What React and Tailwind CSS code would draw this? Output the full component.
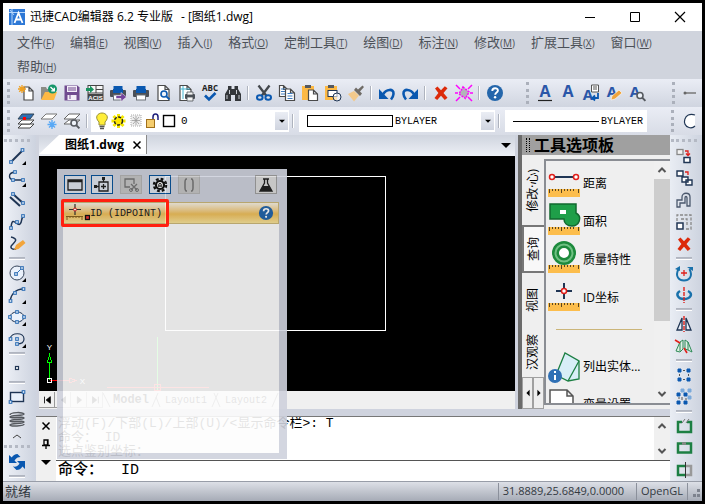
import React, { useState } from 'react';

const menus = [
    ['文件', 'F'], ['编辑', 'E'], ['视图', 'V'], ['插入', 'I'], ['格式', 'O'], ['定制工具', 'T'],
    ['绘图', 'D'], ['标注', 'N'], ['修改', 'M'], ['扩展工具', 'X'], ['窗口', 'W'], ['帮助', 'H'],
];

const blue = '#0a58b0';
const navy = '#1f3554';
const green = '#1c7f43';

function Page({ x = 4, y = 2, w = 10, h = 13, stroke = '#4a4a4a' }) {
    return <path d={`M${x} ${y}h${w - 4}l4 4v${h - 4}h${-w}zM${x + w - 4} ${y}v4h4`} fill="#fff" stroke={stroke} strokeWidth="1.2" />;
}

function Printer() {
    return (
        <>
            <rect x="4.5" y="2" width="9" height="4" fill={blue} />
            <rect x="1" y="6" width="16" height="7" rx="1" fill="#4b5057" />
            <rect x="4" y="5" width="10" height="4" fill={blue} />
            <rect x="4.5" y="11" width="9" height="5" fill="#fff" stroke="#6d7278" />
        </>
    );
}

function Lens({ x, y, r = 3, color = '#55595f' }) {
    return (
        <g fill="#eef3fa" stroke={color} strokeWidth="1.6">
            <circle cx={x} cy={y} r={r} />
            <path d={`M${x + r - 0.6} ${y + r - 0.6}l3 3`} strokeWidth="2" />
        </g>
    );
}

function Node({ x, y }) {
    return <rect x={x - 1.3} y={y - 1.3} width="2.6" height="2.6" fill="#fff" stroke="#2f6fb5" strokeWidth="1.1" />;
}

const Corner = () => <path d="M18 14v4h-4z" fill="#000" />;

function LetterA({ x = 9, size = 17, y = 14 }) {
    return <text x={x} y={y} fontSize={size} fontWeight="700" fontFamily="Open Sans, sans-serif" textAnchor="middle" fill="#2a56a8">A</text>;
}

function Help() {
    return (
        <>
            <circle cx="9" cy="9" r="8" fill="#2466ab" />
            <path d="M6.3 7c0-3.7 5.6-3.5 5.6-.4 0 2-2.7 2-2.7 4.2" fill="none" stroke="#fff" strokeWidth="1.9" />
            <circle cx="9.1" cy="13.3" r="1.2" fill="#fff" />
        </>
    );
}

function Cross() {
    return <path d="M3 4.5l2.500-2L9 6.200 12.800 2.300 15.500 4.300 11.500 9l4 4.800L12.800 16 9 11.700 5.200 16l-2.700-2L6.400 9z" fill="#dc2a0a" />;
}

const icons = {
    new: (
        <>
            <Page x={7} y={3} w={9} h={13} />
            <path d="M5 1v8M1 5h8M2.200 2.200l5.600 5.600M7.800 2.200L2.200 7.800" stroke="#f0a020" strokeWidth="1.3" />
        </>
    ),
    open: (
        <>
            <path d="M1 15V3h5l1 2h5v10z" fill="#8c8c86" />
            <path d="M1 16l4-8h12l-3 8z" fill="#fdb944" />
            <circle cx="12.500" cy="5" r="4.500" fill="#16966a" />
            <path d="M10.500 3l3.500 3.500M14.300 3.800v3h-3" stroke="#fff" fill="none" strokeWidth="1.3" />
        </>
    ),
    save: (
        <>
            <path d="M1.500 1.500h13l2 2v13h-15z" fill="#704b8f" />
            <path d="M4 2h10v6H4zM4.500 11h9v5h-9z" fill="#f3eef8" />
            <path d="M5 4h8M5 6h8M7 11v4" stroke="#704b8f" />
        </>
    ),
    import: (
        <>
            <rect x="2" y="1.500" width="15" height="15" fill="#f7f7f7" stroke="#454545" />
            <path d="M10 2v7M10 5.500h7M2 9h15" stroke="#454545" />
            <rect x="2" y="10" width="15" height="7" fill="#454545" />
            <text x="9.500" y="16" fontSize="6" fontWeight="700" textAnchor="middle" fontFamily="Liberation Sans, sans-serif" fill="#fff">ACIS</text>
            <path d="M0 4h4V1.500L8 5.500 4 9V7H0z" fill="#18925f" />
        </>
    ),
    printExport: <><Printer /><path d="M7 11.500h5V8.500l5.500 4.500-5.500 4.500v-3H7z" fill="#75469b" stroke="#fff" strokeWidth=".5" /></>,
    print: <Printer />,
    preview: <><Page x={3} y={1.5} w={11} h={15} /><Lens x={9} y={10} color={blue} /></>,
    pageSetup: (
        <>
            <Page x={2} y={1.5} w={11} h={15} />
            <path d="M5 2v13M2 5h10" stroke="#42b5d1" />
            <rect x="7" y="10" width="10" height="5" rx="1" fill="#4b5057" />
            <path d="M9 8h6v3H9zM9 13h6v4H9z" fill="#f4f4f4" stroke="#4b5057" strokeWidth=".8" />
        </>
    ),
    spell: (
        <>
            <text x="9" y="7" fontSize="8" fontWeight="700" textAnchor="middle" fontFamily="Open Sans, sans-serif" fill="#222">ABC</text>
            <path d="M4 11.500l4 4 6.500-6.500" stroke={blue} strokeWidth="2.600" fill="none" />
        </>
    ),
    find: (
        <g fill="#33363a">
            <path d="M4 2h3.500v3h3V2H14v3l3 5v7h-6v-6H7v6H1v-7l3-5z" />
            <path d="M3 11v4M15 11v4M5.500 6v4M12.500 6v4" stroke="#c9ccd2" />
        </g>
    ),
    cut: (
        <>
            <path d="M3.500 1.500L11.500 12M14.500 1.500L6.500 12" stroke="#44484d" strokeWidth="2.300" />
            <ellipse cx="4.800" cy="13.500" rx="2.800" ry="2.300" fill="none" stroke={blue} strokeWidth="2" />
            <ellipse cx="13.200" cy="13.500" rx="2.800" ry="2.300" fill="none" stroke={blue} strokeWidth="2" />
        </>
    ),
    copy: (
        <>
            <Page x={1.5} y={1.5} w={8} h={11} />
            <path d="M3 5h4M3 7.500h4M3 10h4" stroke="#3e7cc0" />
            <Page x={7.5} y={5} w={9} h={11.500} />
            <path d="M9.500 9.500h5M9.500 12h5M9.500 14.500h5" stroke="#3e7cc0" />
        </>
    ),
    paste: (
        <>
            <rect x="1" y="2" width="12" height="14" fill="#fdb944" />
            <path d="M4 1h6v3H4z" fill="#55595f" />
            <Page x={7.5} y={6} w={9} h={10.500} />
        </>
    ),
    pasteSpecial: (
        <>
            <path d="M1 2h12v14H1z" fill="#fdb944" />
            <path d="M4 1h6v3H4z" fill="#55595f" />
            <rect x="4" y="6.500" width="9" height="6" fill="#fff" stroke={navy} />
            <circle cx="13" cy="13" r="4" fill="#fff" fillOpacity=".6" stroke={navy} />
        </>
    ),
    brush: (
        <>
            <path d="M1 10l6-3 5 4.500-5 6z" fill="#f2c98c" />
            <path d="M7 6l6 6 2-2.500-2-2 4-4.500-1.500-1.500L11 5.500 9 3.500z" fill="#6f6b66" />
        </>
    ),
    undo: <><path d="M1 5v10h9.500z" fill={blue} /><path d="M5 10.500C8 5 16 4 15.500 10c-.2 2.500-1.200 4-2.500 5.500" fill="none" stroke={blue} strokeWidth="2.600" /></>,
    redo: <><path d="M17 5v10H7.500z" fill={blue} /><path d="M13 10.500C10 5 2 4 2.500 10c.2 2.500 1.200 4 2.500 5.500" fill="none" stroke={blue} strokeWidth="2.600" /></>,
    delete: <Cross />,
    erase: (
        <>
            <path d="M1 1l4 4M17 1l-4 4M1 17l4-4M17 17l-4-4M0 9h3M15 9h3" stroke="#f0f" strokeWidth="1.500" />
            <path d="M8 3l6 5-3.500 6.500L4 10z" fill="#b2b5b8" stroke="#f0f" strokeWidth="1.500" strokeDasharray="2 1" />
        </>
    ),
    help: <Help />,
    textA: <><LetterA y={13} size={16} /><path d="M2 16.500h14" stroke="#222" strokeWidth="1.200" /></>,
    textPlain: <LetterA y={13} size={16} />,
    textDoc: (
        <>
            <LetterA x={6} y={16} size={15} />
            <path d="M9.500 1h7v7h-7zM11 3h4M11 5h4" fill="#fff" stroke="#555" />
            <path d="M16 9v5h-5M13 11.500L10.500 14l2.500 2.500" fill="none" stroke={blue} strokeWidth="1.800" />
        </>
    ),
    textEdit: <><LetterA x={7} y={13} size={15} /><path d="M6 16l1-4 7-6 3 3-7 6z" fill="#f0a43c" stroke="#fff" strokeWidth=".6" /></>,
    textFind: <><LetterA x={7} y={13} size={15} /><Lens x={12} y={11.500} /></>,
    layers: (
        <>
            <path d="M1 16l4-4h12l-4 4z" fill="#fff" stroke="#444" />
            <path d="M1 12l4-4h12l-4 4z" fill="#fff" stroke="#444" />
            <path d="M1 7l4-5h12l-4 5z" fill="#2e6fb3" stroke="#345" />
            <rect x="6" y="5" width="3" height="3" fill="#f00" />
        </>
    ),
    layerFreeze: (
        <>
            <path d="M1 7l5-5h11l-5 5z" fill="#fff" stroke="#777" />
            <path d="M12 8v9M7.500 12.500h9M9 9.500l6 6M15 9.500l-6 6" stroke="#5aa9f5" strokeWidth="1.400" />
        </>
    ),
    layerFind: (
        <>
            <path d="M1 12l5-4h11l-5 4z" fill="#fff" stroke="#666" />
            <path d="M1 7l5-5h11l-5 5z" fill="#fff" stroke="#666" />
            <Lens x={11} y={11} />
        </>
    ),
    dimension: <><path d="M2 9h12" stroke="#777" strokeWidth="1.500" /><circle cx="3" cy="9" r="1.500" fill="#666" /></>,
    arcTool: <path d="M14 3C3-1 0 14 8 15.500c3 1 5-.500 6-1.500" fill="#fff" stroke={navy} strokeWidth="1.200" />,
    line: <><path d="M3 15L14 4" stroke={navy} strokeWidth="2" /><Node x={3} y={15} /><Node x={14.500} y={3} /><Corner /></>,
    polyline: <><path d="M7 3C-1 4 1 10 5 11h10" stroke={navy} fill="none" strokeWidth="1.400" /><Node x={7} y={3} /><Node x={5} y={11} /><Node x={15} y={11} /><Corner /></>,
    doubleLine: <><path d="M2 6l10 9M5 3l11 10" stroke={navy} strokeWidth="2" /><Node x={5} y={3} /><Node x={15} y={12} /></>,
    spline: <><path d="M3 15c1-14 6-1 9-4s0-5 4-8" stroke={navy} fill="none" strokeWidth="1.500" /><Node x={3} y={15} /><Node x={9} y={9} /><Node x={15} y={3} /></>,
    sketch: <><path d="M3 2c8 2 4 5 1 8s1 5 4 4" stroke={navy} fill="none" strokeWidth="1.500" /><path d="M6 15l2-5 7-5 2.500 3-7 6z" fill="#f2a53c" /></>,
    circle: <><circle cx="9" cy="9" r="7" fill="#eaf1fb" stroke="#37465c" /><path d="M8 10l5-5" stroke="#2f6fb5" /><Node x={8} y={10} /><Node x={14} y={4} /><Corner /></>,
    arc: <><path d="M2 15c1-7 6-12 13-12" stroke={navy} fill="none" strokeWidth="1.300" /><Node x={2.500} y={15} /><Node x={7} y={7} /><Node x={15.500} y={3} /><Corner /></>,
    ellipse: <><ellipse cx="9" cy="9" rx="7" ry="5" fill="#eaf1fb" stroke={navy} /><Node x={9} y={4} /><Node x={2} y={9} /><Node x={16} y={9} /><Node x={9} y={14} /><Corner /></>,
    ellipseArc: <><path d="M2 9c1-7 14-7 14 0 0 4-3 5-7 5" stroke={navy} fill="none" strokeWidth="1.200" /><Node x={2.500} y={9} /><Node x={9} y={9} /><Node x={9} y={14} /><Corner /></>,
    point: <rect x="7.500" y="7.500" width="3" height="3" fill="#fff" stroke={navy} strokeWidth="1.200" />,
    rect: <><rect x="2.500" y="4.500" width="13" height="9" fill="#eaf1fb" stroke={navy} strokeWidth="1.400" /><Node x={2.500} y={14} /><Node x={15.500} y={4} /></>,
    coil: <path d="M2 5c0-3 14-3 14-1S2 5 2 7s14-1 14 1S2 9 2 11s14-1 14 1S2 13 2 15s14 1 14-1" fill="none" stroke="#55595f" strokeWidth="1.500" />,
    sync: (
        <>
            <path d="M1 2v8h8L6.500 7.500C8 5 10 4 12.500 4L9.500 1C7 1 5 2.500 3.800 4.500z" fill={blue} />
            <path d="M17 16V8H9l2.500 2.500C10.500 13 8 14 5 13.500L8.500 17c2.500 0 4.500-1 6-3.500z" fill={blue} />
        </>
    ),
    copySel: <><rect x="2" y="2.500" width="6" height="5" fill="#f2f2f2" stroke="#888" strokeWidth="1.300" /><path d="M10 4h3v4M11 6.500l2 2 2-2" fill="none" stroke="#e0201b" strokeWidth="1.300" /><rect x="9" y="10.500" width="6" height="5" fill="#fff" stroke={navy} strokeWidth="1.500" /></>,
    copyMulti: <><path d="M2 2h6v5H2zM7 8h6v5H7zM11 11h6v5h-6z" fill="#fff" stroke={navy} strokeWidth="1.400" /><path d="M10 3h3v3" fill="none" stroke="#e0201b" strokeWidth="1.300" /></>,
    offset: <path d="M2 16V9h5V6c0-5 8-5 8 0v9h-3V7c0-2-2-2-2 0v5H5v4z" fill="none" stroke="#4b586d" strokeWidth="1.300" />,
    scale: <><path d="M2 8V2h14v14h-6M6 6h6v6" fill="none" stroke="#888" strokeWidth="1.300" strokeDasharray="3 1.500" /><rect x="2" y="10" width="6" height="6" fill="#fff" stroke={navy} strokeWidth="1.500" /></>,
    rotate: <><path d="M3.500 5c-4 8 1 11.500 5.500 11.500S18.500 13 14.500 5" fill="none" stroke="#1971ab" strokeWidth="2" /><path d="M0 5l5-3v5zM12 3h6v4z" fill="#1971ab" /><path d="M9 6v6M6 9h6" stroke="#e0201b" strokeWidth="1.300" /></>,
    rotate3d: <><path d="M5 5c-5 3-2 8 4 8s10-5 4-8" fill="none" stroke="#1971ab" strokeWidth="2.500" /><path d="M9 1v16" stroke="#e0201b" strokeWidth="1.400" strokeDasharray="4 1" /></>,
    mirror: <><path d="M7 3v12H2zM11 3v12h5z" fill="#e7eef8" stroke={navy} strokeWidth="1.300" /><path d="M9 1v16" stroke="#e0201b" strokeWidth="1.400" strokeDasharray="4 1" /></>,
    mirror3d: <><path d="M1 14l4-9 3-2v9l-3 3zM10 12V3l3 2 4 10-4-2zM5 5v9M13 5v8" fill="#dff0e6" stroke="#2d8a56" /><path d="M0 3l5 3M9 11l3 5" stroke="#e0201b" strokeWidth="1.600" /></>,
    array: <><path d="M3 3h3v3H3zM12 3h3v3h-3zM3 12h3v3H3zM12 12h3v3h-3z" fill={blue} stroke={blue} /><path d="M8 4.500h2M8 13.500h2M4.500 8v2M13.500 8v2" stroke="#555" /></>,
    array3d: <><path d="M6 1h3v3H6zM13 1h3v3h-3zM13 8h3v3h-3z" fill="#7ba9da" stroke="#7ba9da" /><path d="M2 5h3v3H2zM9 5h3v3H9zM2 13h3v3H2zM9 13h3v3H9z" fill={blue} stroke={blue} /><path d="M7 9v3M3 10h2M10 11h2" stroke="#555" /></>,
    break: <><path d="M7 5H3v10h13V5h-4" fill="none" stroke={green} strokeWidth="2.500" /><path d="M7 6l3-4M11 6l3-4" stroke="#777" /></>,
    join: <><rect x="3" y="4.500" width="13" height="9" fill="none" stroke={green} strokeWidth="2.500" /><path d="M7 4.500h4" stroke="#888" strokeWidth="2.500" /></>,
    trim: <><path d="M10 5H3v9h7" fill="none" stroke={green} strokeWidth="2.500" /><path d="M11 5h5v9h-5" fill="none" stroke="#999" strokeWidth="2.500" /><path d="M10.500 1v16" stroke="#333" /></>,
};

const standardTools = [
    'new', 'open', 'save', 'import', 'printExport', 'print', 'preview', 'pageSetup', 'spell', 'find', '|',
    'cut', 'copy', 'paste', 'pasteSpecial', 'brush', '|', 'undo', 'redo', '|', 'delete', 'erase', '|', 'help',
];
const textTools = ['textA', 'textPlain', 'textDoc', 'textEdit', 'textFind'];
const drawTools = [
    'line', 'polyline', 'doubleLine', 'spline', 'sketch', '|', 'circle', 'arc', 'ellipse', 'ellipseArc', '|',
    'point', '|', 'rect', 'coil',
];
const modifyTools = [
    'copySel', 'copyMulti', 'offset', 'scale', 'delete', '|', 'rotate', 'rotate3d', '|', 'mirror', 'mirror3d', '|',
    'array', 'array3d', '|', 'break', 'join', 'trim',
];

function Icon({ name, className = 'size-[18px]' }) {
    return <svg viewBox="0 0 18 18" className={`overflow-visible ${className}`} aria-hidden="true">{icons[name]}</svg>;
}

function HTool({ name }) {
    if (name === '|') return <span className="mx-[3px] h-3.5 w-0.5 shrink-0 border-r border-white bg-[#aeb3be]" />;
    return (
        <button aria-label={name} className="flex h-6 w-[23px] shrink-0 items-center justify-center">
            <Icon name={name} />
        </button>
    );
}

function VTool({ name }) {
    if (name === '|') return <span className="my-[2px] h-[3px] w-4 shrink-0 border-y border-t-[#b0b5c0] border-b-white bg-[#b9bdc7]" />;
    return (
        <button aria-label={name} className="flex h-[22px] w-6 shrink-0 items-center justify-center">
            <Icon name={name} />
        </button>
    );
}

const GripV = () => <span className="mx-1 h-[22px] w-0 shrink-0 border-l-[3px] border-dotted border-[#abb0bb]" />;
const GripH = () => <span className="my-[3px] h-0 w-[26px] shrink-0 border-t-[3px] border-dotted border-[#b4b9c4]" />;

function Arrow({ dir = 'down', className = 'size-2' }) {
    const paths = { down: 'M0 3h10L5 8z', left: 'M7 1v8L3 5z', right: 'M3 1v8l4-4z' };
    return <svg viewBox="0 0 10 10" className={className}><path d={paths[dir]} fill="currentColor" /></svg>;
}

function Chevron({ up }) {
    return (
        <svg viewBox="0 0 10 10" className="size-2.5">
            <path d={up ? 'M1.500 7L5 3.500 8.500 7' : 'M1.500 3L5 6.500 8.500 3'} fill="none" stroke="#555" strokeWidth="2" />
        </svg>
    );
}

const DropButton = () => (
    <span className="pointer-events-none flex h-5 w-[15px] shrink-0 items-center justify-center border border-white bg-linear-to-b from-[#eaedf4] to-[#cfd4df] text-black">
        <Arrow className="size-1.5" />
    </span>
);

function LayerCombo() {
    return (
        <label className="flex h-[22px] w-[198px] shrink-0 items-center bg-white pl-1">
            <svg viewBox="0 0 84 18" className="h-[18px] w-[84px] shrink-0">
                <path d="M4 10C-1 5 3 1 7 1s8 4 3 9v3H4z" fill="#ffee38" stroke="#98903a" />
                <path d="M4.500 14.500h5M5 16.500h4" stroke="#555" strokeWidth="1.500" />
                <path d="M23.500 2v14M16.500 9h14M18.500 4l10 10M28.500 4l-10 10" stroke="#f5e800" strokeWidth="3" />
                <circle cx="23.500" cy="9" r="4" fill="#ffe800" stroke="#222" strokeWidth="1.500" strokeDasharray="3 1.500" />
                <path d="M36 3h10v11H36z" fill="#eee" stroke="#aaa" strokeDasharray="1 1" />
                <path d="M41 4v9M37 8.500h8M38 5l6 7M44 5l-6 7" stroke="#999" strokeWidth=".8" />
                <path d="M58 8V5c0-4 5-4 5 0v3" fill="none" stroke="#1f1f7a" strokeWidth="1.500" />
                <rect x="51.500" y="7.500" width="8" height="8" fill="#f5cd6e" stroke="#a0701c" />
                <rect x="68.500" y="3.500" width="11" height="11" fill="#fff" stroke="#000" strokeWidth="1.400" />
            </svg>
            <select aria-label="图层" className="min-w-0 flex-1 appearance-none bg-transparent pl-0.5 font-['Liberation_Mono',monospace] text-[11px] outline-none">
                <option>0</option>
            </select>
            <DropButton />
        </label>
    );
}

const Ruler = () => (
    <>
        <rect x="0" y="19" width="32" height="8" fill="#fcbd4c" />
        <path d="M1.500 19v4M4.500 19v2M7.500 19v2M10.500 19v2M13.500 19v4M16.500 19v2M19.500 19v2M22.500 19v2M25.500 19v2M30.500 19v4" stroke="#5a4620" />
    </>
);

const paletteItems = [
    {
        label: '距离',
        art: <><path d="M6 7h20" stroke={navy} strokeWidth="2" /><circle cx="4" cy="7" r="2.500" fill="#fff" stroke="#e0201b" strokeWidth="1.500" /><circle cx="28" cy="7" r="2.500" fill="#fff" stroke="#e0201b" strokeWidth="1.500" /><Ruler /></>,
    },
    {
        label: '面积',
        art: <><Ruler /><path d="M2-4h26v9c7 4 3 13-4 13-5 0-8-3-8-7H2z" fill="#1f9f49" stroke="#12692f" strokeWidth="1.500" /><rect x="12" y="2" width="6" height="4" fill="#fff" /></>,
    },
    {
        label: '质量特性',
        art: <><Ruler /><circle cx="16" cy="7" r="8.500" fill="#fff" stroke="#1c8a3c" strokeWidth="7" /><circle cx="16" cy="7" r="8.500" fill="none" stroke="#6fc183" strokeWidth="2" /></>,
    },
    {
        label: 'ID坐标',
        art: <><path d="M16 -1v16M8 7h16" stroke={navy} strokeWidth="2" /><circle cx="16" cy="7" r="2.500" fill="#fff" stroke="#e0201b" strokeWidth="1.500" /><Ruler /></>,
    },
];

function ToolPalette() {
    const tabs = [['修改·心)', 'h-[70px]'], ['查询', 'h-12'], ['视图', 'h-[54px]'], ['汉观察', 'h-[50px]']];
    const [active, setActive] = useState('查询');
    return (
        <section className="flex w-[152px] shrink-0 flex-col border-l-4 border-[#6b6b6b] bg-[#efefef]">
            <h2 className="flex h-5 shrink-0 items-center gap-1 bg-[#a0a0a0] pl-1 text-[16px] font-bold text-black">
                <span className="h-3.5 w-1 border-x border-dotted border-black" />
                工具选项板
            </h2>
            <div className="flex min-h-0 flex-1">
                <div className="flex w-[22px] flex-col overflow-hidden">
                    {tabs.map(([label, height]) => (
                        <button
                            key={label}
                            onClick={() => setActive(label)}
                            className={`flex w-full shrink-0 items-center justify-center text-[12px] whitespace-nowrap ${height} ${active === label ? 'border-2 border-r-0 border-[#777] bg-[#f8f8f8]' : ''}`}
                        >
                            <span className="rotate-180 [writing-mode:vertical-rl] [text-orientation:sideways]">{label}</span>
                        </button>
                    ))}
                    <div className="flex min-h-0 flex-1">
                        <button aria-label="向左" className="flex flex-1 items-center justify-center border border-[#a0a0a0] bg-[#eee]"><Arrow dir="left" /></button>
                        <button aria-label="向右" className="flex flex-1 items-center justify-center border border-[#a0a0a0] bg-[#eee]"><Arrow dir="right" /></button>
                    </div>
                </div>
                <div className="mt-1 mb-1 flex min-w-0 flex-1 border-2 border-r-0 border-[#8a8d93] bg-[#efefef]">
                    <ul className="min-w-0 flex-1 overflow-hidden pt-1 pl-0.5 text-[12px] text-black">
                        {paletteItems.map((item) => (
                            <li key={item.label} className="h-[38px]">
                                <button className="flex h-full w-full items-center gap-[3px] whitespace-nowrap">
                                    <svg viewBox="0 0 32 28" className="h-7 w-8 shrink-0 overflow-visible">{item.art}</svg>
                                    {item.label}
                                </button>
                            </li>
                        ))}
                        <li className="mt-3 mr-3 ml-2 border-t border-[#cbb579]" />
                        <li className="mt-[18px] h-[38px]">
                            <button className="flex h-full w-full items-center gap-[3px] whitespace-nowrap">
                                <svg viewBox="0 0 32 32" className="size-8 shrink-0">
                                    <path d="M8 24L17 2l14 8v18l-11 2z" fill="#d7eef7" stroke={green} strokeWidth="1.300" />
                                    <path d="M20 30L31 10" stroke={green} strokeWidth="1.300" />
                                    <circle cx="7" cy="25" r="7" fill="#2f70b5" />
                                    <path d="M7 24v5M7 20v2" stroke="#fff" strokeWidth="2" />
                                </svg>
                                列出实体...
                            </button>
                        </li>
                        <li className="h-[38px]">
                            <button className="flex h-full w-full items-center gap-[3px] whitespace-nowrap">
                                <svg viewBox="0 0 32 34" className="h-[34px] w-8 shrink-0">
                                    <path d="M2 2h17l6 6v25H2zM19 2v6h6" fill="#fff" stroke="#555" strokeWidth="1.500" />
                                </svg>
                                变量设置
                            </button>
                        </li>
                    </ul>
                    <div className="flex w-4 flex-col items-center bg-[#f0f0f0] py-1">
                        <Chevron up />
                        <span className="mt-1 h-[142px] w-full bg-[#cdcdcd]" />
                        <span className="flex-1" />
                        <Chevron />
                    </div>
                </div>
            </div>
        </section>
    );
}

function Drawing() {
    return (
        <svg className="min-h-0 w-full flex-1 bg-black" aria-label="图纸1">
            <g fill="none" shapeRendering="crispEdges">
                <rect x="126.500" y="20.500" width="220" height="154" stroke="#fff" />
                <path d="M118.500 181v54" stroke="#0f0" />
                <path d="M68 231.500h102" stroke="#f00" />
                <rect x="115.500" y="228.500" width="6" height="6" stroke="#f00" />
                <path d="M10.500 224v-18M8.500 206l2-7 2 7z" stroke="#0f0" />
                <path d="M11 224.500h19M30 222l7 2.500-7 2.500z" stroke="#f00" />
                <rect x="8.500" y="222.500" width="4" height="4" stroke="#fff" />
            </g>
            <g fill="#fff" fontSize="8" fontFamily="Liberation Sans, sans-serif" textAnchor="middle">
                <text x="10.500" y="194">Y</text>
                <text x="43.500" y="228">X</text>
            </g>
        </svg>
    );
}

function SheetTabs() {
    const nav = ['M3 2v8M10 2v8L5 6z', 'M9 2v8L4 6z', 'M4 2v8l5-4z', 'M10 2v8M3 2v8l5-4z'];
    return (
        <div className="flex h-[18px] shrink-0 items-center bg-[#f0f0f0] font-['Liberation_Mono',monospace] text-[10px] text-black">
            {nav.map((d) => (
                <button key={d} aria-label="切换布局" className="flex h-4 w-4 items-center justify-center border-r border-b border-[#999]">
                    <svg viewBox="0 0 12 12" className="size-2.5"><path d={d} fill="#000" stroke="#000" /></svg>
                </button>
            ))}
            <svg viewBox="0 0 8 16" className="h-4 w-2"><path d="M0 1l7 14" stroke="#666" /></svg>
            <button className="px-0.5 text-[12px] font-bold">Model</button>
            <svg viewBox="0 0 10 16" className="h-4 w-2.5"><path d="M1 15L7 1M5 5l4 10" stroke="#666" fill="none" /></svg>
            <button className="px-1">Layout1</button>
            <svg viewBox="0 0 10 16" className="h-4 w-2.5"><path d="M1 15L7 1M3 1l6 14" stroke="#666" fill="none" /></svg>
            <button className="px-1">Layout2</button>
            <svg viewBox="0 0 8 16" className="h-4 w-2"><path d="M1 15L7 1" stroke="#666" /></svg>
        </div>
    );
}

function PromptPalette() {
    const box = 'flex h-[19px] w-[22px] items-center justify-center border';
    return (
        <div className="absolute top-[34px] bottom-[22px] left-[21px] flex w-[230px] flex-col bg-[#cfd2dd] px-1.5 pt-1.5 pb-1.5 opacity-90">
            <div className="mb-2 flex items-center gap-[5px] pr-1 pl-px">
                <button aria-label="窗口" className={`${box} border-[#0a559c] bg-[#dfe5ee]`}>
                    <svg viewBox="0 0 16 16" className="size-4"><path d="M1 3h14v10H1zM1 4.500h14" fill="none" stroke="#222" strokeWidth="1.300" /></svg>
                </button>
                <button aria-label="追加" className={`${box} border-[#0a559c] bg-[#dfe5ee]`}>
                    <svg viewBox="0 0 16 16" className="size-4"><path d="M5 5h9v9H5zM9.500 7v5M7 9.500h5M9.500 5V2M5 9.500H2" fill="none" stroke="#222" strokeWidth="1.300" /><path d="M8 0h3v3H8zM0 8h3v3H0z" fill="#222" /></svg>
                </button>
                <button aria-label="剪切" disabled className={`ml-[2px] ${box} border-[#b5b5b5] bg-[#c6c6c6]`}>
                    <svg viewBox="0 0 16 16" className="size-4"><path d="M7 10H2V2h9v5M8 7l6 6M14 7l-6 6" fill="none" stroke="#777" strokeWidth="1.300" /><circle cx="8" cy="13" r="1.500" fill="none" stroke="#777" /><circle cx="14" cy="13" r="1.500" fill="none" stroke="#777" /></svg>
                </button>
                <button aria-label="设置" className={`ml-[2px] ${box} border-[#0a559c] bg-[#dfe5ee]`}>
                    <svg viewBox="0 0 16 16" className="size-4"><circle cx="8" cy="8" r="6" fill="none" stroke="#111" strokeWidth="2.500" strokeDasharray="2.700 2" /><circle cx="8" cy="8" r="4" fill="#fff" stroke="#111" strokeWidth="2.200" /><path d="M6.800 10V7.500c0-1.500 2.400-1.500 2.400 0V10M7 9h2" fill="none" stroke="#111" /></svg>
                </button>
                <button aria-label="括号" disabled className={`ml-[2px] ${box} border-[#b5b5b5] bg-[#c6c6c6]`}>
                    <svg viewBox="0 0 16 16" className="size-4"><path d="M6 2H5C4 3 4 3 4 5v6c0 2 0 2 1 3h1M10 2h1c1 1 1 1 1 3v6c0 2 0 2-1 3h-1" fill="none" stroke="#777" strokeWidth="1.500" /></svg>
                </button>
                <span className="flex-1" />
                <button aria-label="实验" className={`${box} border-[#a0a0a0] bg-[#dcdcdc]`}>
                    <svg viewBox="0 0 16 16" className="size-4"><path d="M5 2h6M6.500 2v4L2 14h12L9.500 6V2" fill="none" stroke="#222" strokeWidth="1.300" /><path d="M5 9h6l3 5H2z" fill="#222" /></svg>
                </button>
            </div>
            <div className="mr-0.5 flex h-[22px] shrink-0 items-center border border-[#ccb87a] bg-linear-to-b from-[#f8f2e4] via-[#efc05c] via-55% to-[#f8e39a] pr-1 pl-0.5">
                <button className="flex flex-1 items-center font-['Liberation_Mono',monospace] text-[10px] whitespace-pre text-[#222]">
                    <svg viewBox="0 0 24 18" className="h-[18px] w-6">
                        <path d="M9 0v11M3 5.500h12" stroke="#333" strokeWidth="1.200" />
                        <circle cx="9" cy="5.500" r="1.500" fill="#fff" stroke="#e0201b" />
                        <path d="M0 12.500h17M1 12v4M4 12v2M7 12v2M10 12v2M13 12v2M16 12v4" stroke="#8a6420" fill="none" />
                        <rect x="19.500" y="11.500" width="4" height="4" fill="#e33" stroke="#111" strokeWidth="1.300" />
                    </svg>
                    ID (IDPOINT)
                </button>
                <Icon name="help" className="size-4" />
            </div>
            <div className="mr-0.5 flex-1 bg-[#fdfdfd]" />
        </div>
    );
}

function CommandWindow() {
    const [command, setCommand] = useState('命令：  ID');
    return (
        <div className="flex h-[65px] shrink-0 border-t border-[#777] bg-white">
            <div className="flex w-5 shrink-0 flex-col items-center gap-2 bg-[#f0f0f0] py-1 text-black">
                <button aria-label="关闭"><svg viewBox="0 0 10 10" className="size-2.5"><path d="M1.500 1.500l7 7M8.500 1.500l-7 7" stroke="#000" strokeWidth="1.500" /></svg></button>
                <button aria-label="固定"><svg viewBox="0 0 10 10" className="size-2.5"><path d="M3 1h4v5H3zM1 6.500h8M5 7v3M6.500 1v5" fill="none" stroke="#000" strokeWidth="1.300" /></svg></button>
                <button aria-label="菜单"><Arrow className="size-2.5" /></button>
            </div>
            <div className="flex min-w-0 flex-1 flex-col font-['Liberation_Mono','Noto_Sans_CJK_SC',monospace] text-black">
                <div className="flex min-h-0 flex-1 border-b border-[#555]">
                    <div className="min-w-0 flex-1 overflow-hidden pl-0.5 text-[13px] leading-[14px] whitespace-pre">
                        <p>{'浮动(F)/下部(L)/上部(U)/<显示命令栏>: T'}</p>
                        <p>{'命令： ID'}</p>
                        <p>选点鉴别坐标：</p>
                    </div>
                    <div className="flex w-4 flex-col items-center justify-between bg-[#f0f0f0] py-1">
                        <Chevron up />
                        <Chevron />
                    </div>
                </div>
                <input
                    aria-label="命令"
                    value={command}
                    onChange={(e) => setCommand(e.target.value)}
                    className="h-5 w-full px-0.5 text-[15px] font-medium outline-none"
                />
            </div>
        </div>
    );
}

export default function App() {
    return (
        <div className="flex h-screen flex-col overflow-hidden border-[3px] border-black bg-[#d0d5df] font-['Open_Sans','Noto_Sans_CJK_SC',sans-serif]">
            <header className="flex h-7 shrink-0 items-center bg-white pl-1.5 text-black">
                <svg viewBox="0 0 16 16" className="size-4 shrink-0">
                    <rect width="16" height="16" fill="#2d78d6" />
                    <path d="M3 0v16M0 3.500h16M1 1l4 5" stroke="#b6d6fa" />
                    <path d="M5.500 14L9.500 4l4 10M7 10.500h5" fill="none" stroke="#fff" strokeWidth="1.800" />
                </svg>
                <h1 className="ml-[5px] flex gap-2 text-[12px] whitespace-pre">
                    <span>迅捷CAD编辑器 6.2 专业版</span>
                    <span>- [图纸1.dwg]</span>
                </h1>
                <span className="flex-1" />
                <button aria-label="最小化" className="flex w-[45px] justify-center">
                    <svg viewBox="0 0 12 12" className="size-3"><path d="M1 6.500h10" stroke="#000" /></svg>
                </button>
                <button aria-label="最大化" className="flex w-[45px] justify-center">
                    <svg viewBox="0 0 12 12" className="size-3"><path d="M1.500 1.500h9v9h-9z" fill="none" stroke="#000" /></svg>
                </button>
                <button aria-label="关闭" className="flex w-[45px] justify-center">
                    <svg viewBox="0 0 12 12" className="size-3"><path d="M1 1l10 10M11 1L1 11" stroke="#000" strokeWidth="1.200" /></svg>
                </button>
            </header>

            <nav className="flex h-12 shrink-0 flex-wrap content-start gap-x-4 bg-[#d0d4dd] px-3.5 text-[13px] text-[#4c5158]">
                {menus.map(([label, key]) => (
                    <button key={key} className="flex h-6 items-center">
                        {label}<span className="text-[10px]">(<u>{key}</u>)</span>
                    </button>
                ))}
            </nav>

            <div className="flex h-7 shrink-0 items-center bg-linear-to-b from-[#eaedf5] to-[#d0d5e0]">
                <div className="flex min-w-0 items-center">
                    <GripV />
                    {standardTools.map((name, i) => <HTool key={i} name={name} />)}
                </div>
                <div className="ml-4 flex items-center">
                    <GripV />
                    {textTools.map((name) => <HTool key={name} name={name} />)}
                </div>
                <div className="ml-5 flex items-center">
                    <GripV />
                    <HTool name="dimension" />
                </div>
            </div>

            <div className="flex h-7 shrink-0 items-center bg-linear-to-b from-[#eaedf5] to-[#d8dce6]">
                <GripV />
                <HTool name="layers" />
                <HTool name="layerFreeze" />
                <HTool name="layerFind" />
                <HTool name="|" />
                <LayerCombo />
                <HTool name="|" />
                <label className="ml-0.5 flex h-[22px] w-[196px] shrink-0 items-center bg-white pl-2">
                    <span className="h-3 w-[86px] shrink-0 border border-black" />
                    <select aria-label="颜色" className="min-w-0 flex-1 appearance-none bg-transparent pl-0.5 font-['Liberation_Mono',monospace] text-[10px] outline-none">
                        <option>BYLAYER</option>
                    </select>
                    <DropButton />
                </label>
                <HTool name="|" />
                <label className="ml-0.5 flex h-[22px] w-[142px] shrink-0 items-center bg-white pl-2">
                    <span className="w-[86px] shrink-0 border-t border-black" />
                    <select aria-label="线型" className="min-w-0 flex-1 appearance-none bg-transparent pl-0.5 font-['Liberation_Mono',monospace] text-[10px] outline-none">
                        <option>BYLAYER</option>
                    </select>
                </label>
                <span className="ml-5" />
                <GripV />
                <HTool name="arcTool" />
            </div>

            <div className="flex min-h-0 flex-1">
                <aside className="flex w-[33px] shrink-0 flex-col items-center overflow-hidden bg-linear-to-r from-[#eef1f7] to-[#cdd3df] pt-px pr-1.5">
                    <GripH />
                    {drawTools.map((name, i) => <VTool key={i} name={name} />)}
                    <button aria-label="更多" className="flex h-3 items-center">
                        <svg viewBox="0 0 10 6" className="h-1.5 w-2.5"><path d="M1 5l4-3 4 3" fill="none" stroke="#444" /></svg>
                    </button>
                    <GripH />
                    <VTool name="sync" />
                    <VTool name="|" />
                </aside>

                <main className="relative flex min-w-0 flex-1 flex-col bg-[#cfd3de]">
                    <div className="flex min-h-0 flex-1">
                        <div className="mr-[3px] ml-[3px] flex min-w-0 flex-1 flex-col">
                            <div className="flex h-[21px] shrink-0 items-end justify-between bg-linear-to-b from-[#cfd4de] to-[#edf0f6] pb-0.5">
                                <div className="flex h-[19px] w-[108px] items-center justify-end gap-2 border-r border-[#888] bg-white pr-1 text-black [clip-path:polygon(20px_0,100%_0,100%_100%,0_100%)]">
                                    <button className="text-[12px] font-bold whitespace-nowrap">图纸1.dwg</button>
                                    <button aria-label="关闭图纸"><svg viewBox="0 0 10 10" className="size-2.5"><path d="M1.500 1.500l7 7M8.500 1.500l-7 7" stroke="#000" strokeWidth="1.500" /></svg></button>
                                </div>
                                <button aria-label="图纸列表" className="mr-1 mb-1"><Arrow className="size-2.5" /></button>
                            </div>
                            <Drawing />
                            <SheetTabs />
                        </div>
                        <ToolPalette />
                    </div>
                    <div className="h-[7px] shrink-0" />
                    <CommandWindow />
                    <PromptPalette />
                    <div className="pointer-events-none absolute top-16 left-[25px] h-7 w-[108px] rounded-xs border-[3px] border-[#ff2010]" />
                </main>

                <aside className="flex w-[32px] shrink-0 flex-col items-center overflow-hidden bg-linear-to-r from-[#e9edf4] to-[#cdd3df] pt-px pr-1">
                    <GripH />
                    {modifyTools.map((name, i) => <VTool key={i} name={name} />)}
                </aside>
            </div>

            <footer className="flex h-5 shrink-0 items-center border-t border-[#989da8] bg-linear-to-b from-[#dde0e7] to-[#a6abb6] text-[11px] text-[#333941]">
                <span className="flex-1 pl-0.5 text-[13px]">就绪</span>
                <span className="border-l border-[#8b909b] px-1 pr-3">31.8889,25.6849,0.0000</span>
                <span className="border-x border-[#8b909b] px-1">OpenGL</span>
                <svg viewBox="0 0 14 14" className="size-3.5"><path d="M9 4h3v3H9zM5 9h3v3H5zM9 9h3v3H9z" fill="#7d828d" /></svg>
            </footer>
        </div>
    );
}
